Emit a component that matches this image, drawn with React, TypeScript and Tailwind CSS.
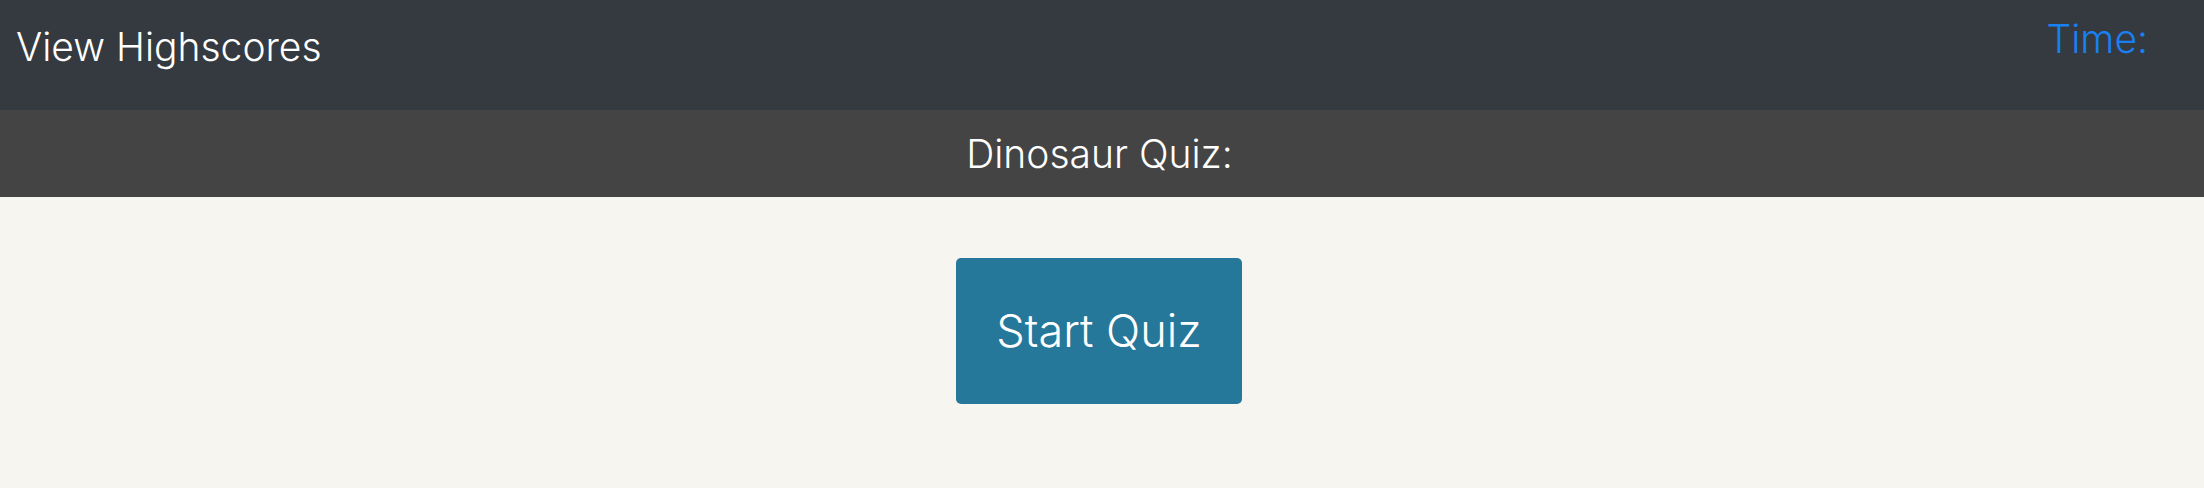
const App = () => {
  return (
    <div className="min-h-[488px] bg-[#f6f5f0] font-['Inter','Liberation_Sans',sans-serif] font-light">
      <header className="flex h-[110px] justify-between bg-[#343a40]">
        <a href="#" className="pl-4 pt-[19px] text-[39px] leading-[56px] text-white">
          View Highscores
        </a>
        <div className="pr-[56px] pt-[11px] text-[39px] leading-[56px] text-[#1a7ff0]">Time:</div>
      </header>
      <div className="flex h-[87px] items-center justify-center bg-[#444444] pr-[5px]">
        <h1 className="text-[39px] leading-[56px] text-white">Dinosaur Quiz:</h1>
      </div>
      <main className="flex justify-center pt-[61px] pr-[6px]">
        <button className="h-[146px] w-[286px] rounded-[5px] bg-[#26789a] text-[45px] font-light text-white">
          Start Quiz
        </button>
      </main>
    </div>
  );
};

export default App;
